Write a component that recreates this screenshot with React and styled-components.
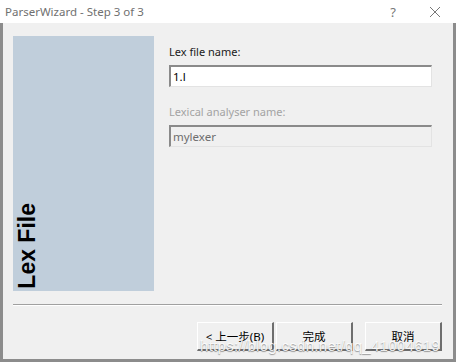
import styled, { createGlobalStyle } from "styled-components"

const Global = createGlobalStyle`
  html, body { margin: 0; padding: 0; background: #f0f0f0; }
  body { font-family: "Noto Sans", "Noto Sans CJK SC", sans-serif; }
`

const Window = styled.div`
  width: 456px;
  height: 362px;
  display: flex;
  flex-direction: column;
  position: relative;
  overflow: hidden;
  background: #f0f0f0;
`

const TitleBar = styled.div`
  height: 23px;
  background: #ffffff;
  display: flex;
  align-items: center;
  padding: 0 0 0 5px;
  color: #707070;
  font-size: 11.5px;
`

const Title = styled.div`
  flex: 1;
  white-space: nowrap;
`

const TitleButton = styled.div`
  width: 42px;
  height: 23px;
  display: flex;
  align-items: center;
  justify-content: center;
  color: #777;
  font-size: 13px;
`

const Body = styled.div`
  flex: 1;
  display: flex;
  flex-direction: column;
  border-left: 3px solid #8c8c8c;
  border-right: 3px solid #8c8c8c;
  border-bottom: 3px solid #8c8c8c;
  padding: 13px 11px 0 10px;
`

const Content = styled.div`
  display: flex;
  height: 255px;
`

const SidePanel = styled.div`
  width: 141px;
  background: #c0cedb;
  display: flex;
  flex-direction: column;
  justify-content: flex-end;
  padding: 0 0 2px 2px;
  box-sizing: border-box;
`

const SideTitle = styled.div`
  writing-mode: vertical-rl;
  transform: rotate(180deg);
  font-family: "Liberation Sans", Arial, sans-serif;
  font-weight: bold;
  font-size: 23px;
  line-height: 24px;
  color: #000;
  white-space: nowrap;
`

const Form = styled.div`
  margin-left: 15px;
  width: 263px;
  display: flex;
  flex-direction: column;
  padding-top: 8px;
`

const Label = styled.div`
  font-size: 11px;
  line-height: 16px;
  color: ${p => (p.disabled ? "#a3a3a3" : "#1a1a1a")};
  margin-bottom: 5px;
`

const Field = styled.div`
  height: 22px;
  box-sizing: border-box;
  border-top: 2px solid #8a8a8a;
  border-left: 2px solid #8a8a8a;
  border-right: 1px solid #e3e3e3;
  border-bottom: 1px solid #e3e3e3;
  background: ${p => (p.disabled ? "#f0f0f0" : "#ffffff")};
  color: ${p => (p.disabled ? "#6d6d6d" : "#000")};
  font-size: 11.5px;
  line-height: 19px;
  padding-left: 2px;
  margin-bottom: 17px;
`

const Separator = styled.div`
  margin-top: 13px;
  height: 1px;
  background: #a0a0a0;
  border-bottom: 1px solid #ffffff;
`

const ButtonRow = styled.div`
  display: flex;
  justify-content: flex-end;
  margin-top: 16px;
`

const Button = styled.div`
  width: 77px;
  height: 29px;
  box-sizing: border-box;
  margin-left: ${p => p.gap || 0}px;
  border-top: 1px solid #ffffff;
  border-left: 1px solid #ffffff;
  border-right: 2px solid #6e6e6e;
  border-bottom: 2px solid #6e6e6e;
  display: flex;
  align-items: center;
  justify-content: center;
  font-size: 11.5px;
  color: #000;
`

const Watermark = styled.div`
  position: absolute;
  left: 200px;
  top: 337px;
  font-family: "Liberation Sans", Arial, sans-serif;
  font-size: 15px;
  color: rgba(255, 255, 255, 0.9);
  text-shadow: 0 1px 1px rgba(90, 90, 90, 0.6);
  letter-spacing: 0.3px;
  white-space: nowrap;
  pointer-events: none;
`

export default function App() {
  return (
    <Window>
      <Global />
      <TitleBar>
        <Title>ParserWizard - Step 3 of 3</Title>
        <TitleButton>?</TitleButton>
        <TitleButton>
          <svg width="12" height="12" viewBox="0 0 12 12">
            <path d="M1 1 L11 11 M11 1 L1 11" stroke="#777" strokeWidth="1" />
          </svg>
        </TitleButton>
      </TitleBar>
      <Body>
        <Content>
          <SidePanel>
            <SideTitle>Lex File</SideTitle>
          </SidePanel>
          <Form>
            <Label>Lex file name:</Label>
            <Field>1.l</Field>
            <Label disabled>Lexical analyser name:</Label>
            <Field disabled>mylexer</Field>
          </Form>
        </Content>
        <Separator />
        <ButtonRow>
          <Button>&lt; 上一步(B)</Button>
          <Button gap={2}>完成</Button>
          <Button gap={12}>取消</Button>
        </ButtonRow>
      </Body>
      <Watermark>https://blog.csdn.net/qq_41004619</Watermark>
    </Window>
  )
}
